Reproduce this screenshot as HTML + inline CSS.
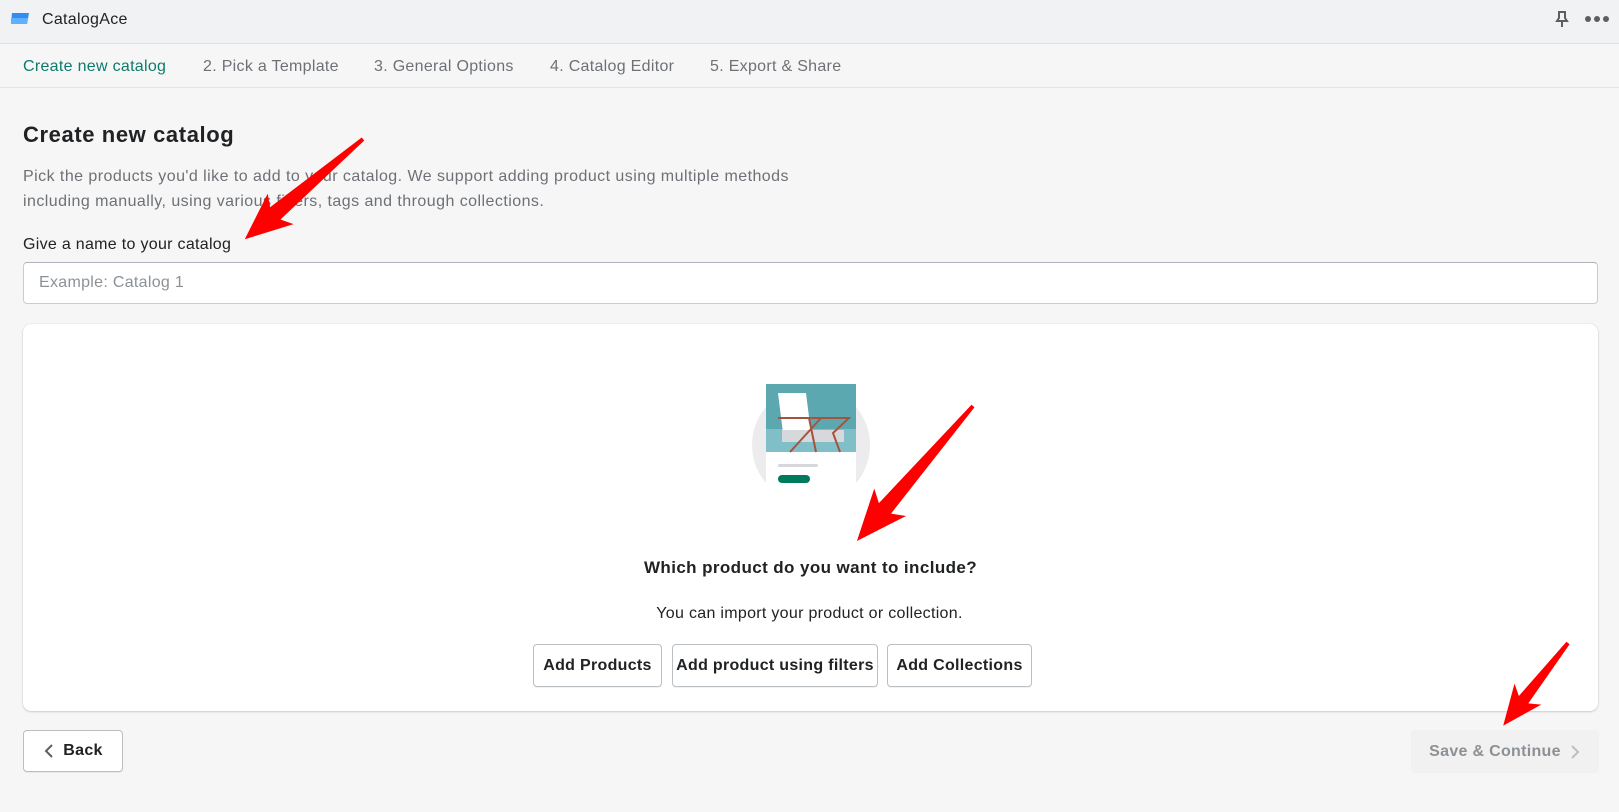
<!DOCTYPE html>
<html><head><meta charset="utf-8"><style>
*{box-sizing:border-box;margin:0;padding:0}
body{width:1619px;height:812px;background:#f6f6f7;font-family:"Liberation Sans",sans-serif;position:relative;overflow:hidden;color:#202223}
.abs{position:absolute;white-space:nowrap}
#top{position:absolute;left:0;top:0;width:1619px;height:44px;background:#f1f2f4;border-bottom:1px solid #dcdfe3}
#nav{position:absolute;left:0;top:44px;width:1619px;height:44px;background:#f6f6f7;border-bottom:1px solid #e1e3e5}
.nv{font-size:16px;color:#6d7175;top:58px;letter-spacing:0.3px}
.btn{position:absolute;background:#fff;border:1px solid #babfc3;border-radius:4px;font-size:16px;font-weight:bold;color:#202223;display:flex;align-items:center;justify-content:center;box-shadow:0 1px 0 rgba(0,0,0,.05);letter-spacing:0.3px}
</style></head><body>
<div id="top"></div>
<svg class="abs" style="left:10px;top:12px" width="20" height="14"><path d="M2 1 H19 L17 12 H1 Z" fill="#2f8ef5"/><path d="M1 6 H18 L17 12 H1Z" fill="#5fb0ff"/></svg>
<div class="abs" style="left:42px;top:11px;font-size:16px;color:#202223;letter-spacing:0.3px">CatalogAce</div>
<svg class="abs" style="left:1554px;top:10px" width="16" height="18" viewBox="0 0 16 18"><path d="M4 2h8M5 2v6L3 11h10l-2-3V2M8 11v6" fill="none" stroke="#5c5f62" stroke-width="2"/></svg>
<div class="abs" style="left:1585px;top:16px;width:6px;height:6px;border-radius:3px;background:#5c5f62"></div>
<div class="abs" style="left:1594px;top:16px;width:6px;height:6px;border-radius:3px;background:#5c5f62"></div>
<div class="abs" style="left:1603px;top:16px;width:6px;height:6px;border-radius:3px;background:#5c5f62"></div>
<div id="nav"></div>
<div class="abs nv" style="left:23px;color:#0e7a6c">Create new catalog</div>
<div class="abs nv" style="left:203px">2. Pick a Template</div>
<div class="abs nv" style="left:374px">3. General Options</div>
<div class="abs nv" style="left:550px">4. Catalog Editor</div>
<div class="abs nv" style="left:710px">5. Export &amp; Share</div>
<div class="abs" style="left:23px;top:122px;font-size:22px;font-weight:bold;letter-spacing:0.6px">Create new catalog</div>
<div class="abs" style="left:23px;top:164px;font-size:16px;color:#6d7175;line-height:25px;letter-spacing:0.45px">Pick the products you'd like to add to your catalog. We support adding product using multiple methods<br>including manually, using various filters, tags and through collections.</div>
<div class="abs" style="left:23px;top:236px;font-size:16px;letter-spacing:0.3px">Give a name to your catalog</div>
<div class="abs" style="left:23px;top:262px;width:1575px;height:42px;background:#fff;border:1px solid #c9cccf;border-top-color:#aeb4b9;border-radius:4px"></div>
<div class="abs" style="left:39px;top:274px;font-size:16px;color:#8c9196;letter-spacing:0.3px">Example: Catalog 1</div>
<div class="abs" style="left:23px;top:324px;width:1575px;height:387px;background:#fff;border-radius:8px;box-shadow:0 0 1px rgba(0,0,0,.2),0 1px 2px rgba(0,0,0,.15)"></div>
<svg class="abs" style="left:750px;top:380px" width="124" height="110" viewBox="0 0 124 110">
<defs><clipPath id="c"><rect x="0" y="0" width="124" height="105"/></clipPath></defs>
<circle cx="61" cy="65" r="59" fill="#ececee" clip-path="url(#c)"/>
<rect x="16" y="4" width="90" height="101" fill="#fff"/>
<rect x="16" y="4" width="90" height="45" fill="#5ca8b1"/>
<rect x="16" y="49" width="90" height="23" fill="#80bfc7"/>
<path d="M28 13h28l5 40H33z" fill="#fff"/>
<rect x="32" y="50" width="62" height="12" fill="#d6d8db"/>
<path d="M28 38h60M40 72L71 38M59 38l7 34M71 38h28L83 53l7 19" fill="none" stroke="#a6533e" stroke-width="2"/>
<rect x="28" y="84" width="40" height="3" rx="1.5" fill="#d6d8db"/>
<rect x="28" y="95" width="32" height="8" rx="4" fill="#007a5c"/>
</svg>
<div class="abs" style="left:0;width:1619px;text-align:center;top:558px;font-size:17px;font-weight:bold;padding-left:2px;letter-spacing:0.4px">Which product do you want to include?</div>
<div class="abs" style="left:0;width:1619px;text-align:center;top:605px;font-size:16px;letter-spacing:0.3px">You can import your product or collection.</div>
<div class="btn" style="left:533px;top:644px;width:129px;height:43px">Add Products</div>
<div class="btn" style="left:672px;top:644px;width:206px;height:43px">Add product using filters</div>
<div class="btn" style="left:887px;top:644px;width:145px;height:43px">Add Collections</div>
<div class="btn" style="left:23px;top:730px;width:100px;height:42px"><svg width="12" height="14" style="margin-right:8px"><path d="M9 1L3 7l6 6" fill="none" stroke="#5c5f62" stroke-width="2"/></svg>Back</div>
<div class="abs" style="left:1411px;top:730px;width:188px;height:43px;background:#f1f1f1;border-radius:4px;display:flex;align-items:center;justify-content:center;font-size:16px;font-weight:bold;color:#8c9196;letter-spacing:0.3px">Save &amp; Continue<svg width="12" height="14" style="margin-left:8px"><path d="M3 1l6 6-6 6" fill="none" stroke="#babfc3" stroke-width="2"/></svg></div>
<svg class="abs" style="left:0;top:0" width="1619" height="812">
<g fill="#f00">
<polygon transform="translate(363,139) rotate(139.7)" points="0,-2 115,-8 108,-20 155,0 108,20 115,8 0,2"/>
<polygon transform="translate(973,406) rotate(130.7)" points="0,-2 135,-8 127,-21 178,0 127,21 135,8 0,2"/>
<polygon transform="translate(1568,643) rotate(128.1)" points="0,-2 72,-6 65,-17 105,0 65,17 72,6 0,2"/>
</g></svg>
</body></html>
